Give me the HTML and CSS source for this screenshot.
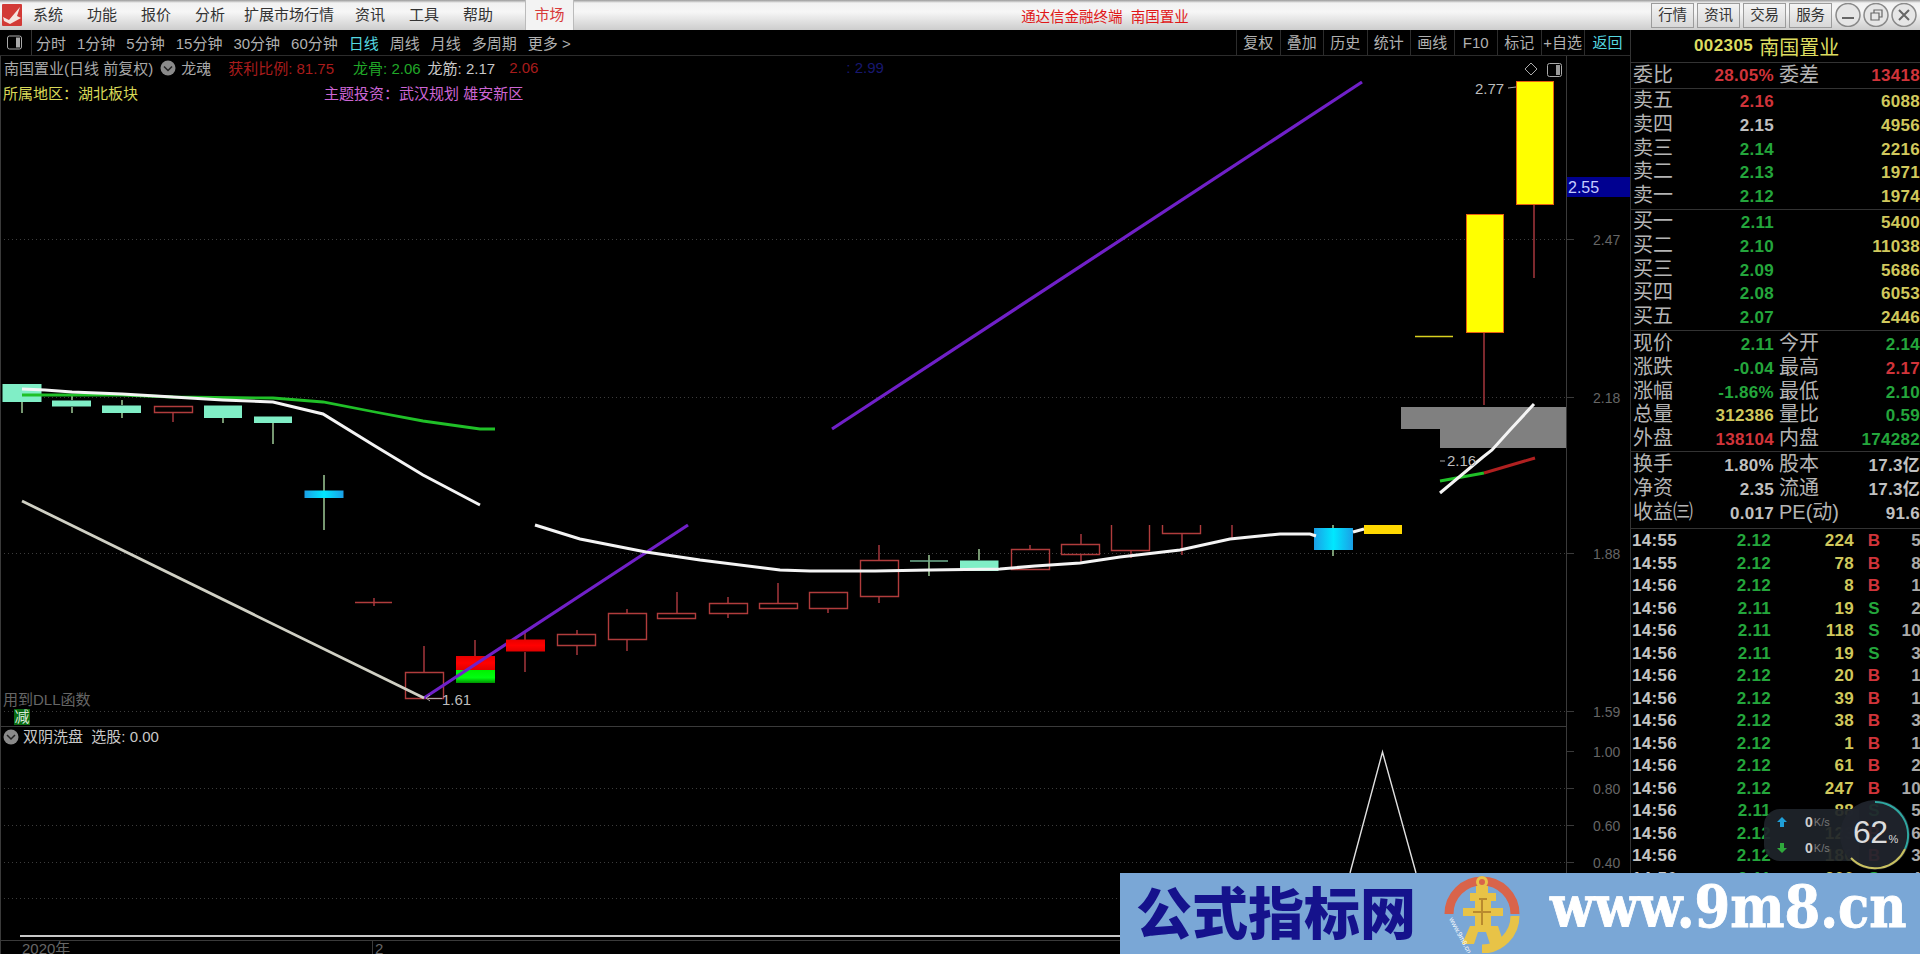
FILE: index.html
```html
<!DOCTYPE html>
<html lang="zh-CN">
<head>
    <meta charset="UTF-8">
    <title>通达信金融终端 南国置业</title>
    <link rel="stylesheet" href="styles.css">
</head>
<body>
<div class="app">

    <!-- menu bar -->
    <header class="menubar">
        <svg class="app-logo" width="20" height="22" viewBox="0 0 20 22">
            <rect width="20" height="22" rx="1" fill="#d23a36"/>
            <path d="M1 13 L7 16 L18 3 L15 12 L19 14 L8 20 L2 17 Z" fill="#f4e4e0"/>
        </svg>
        <nav class="menu">
            <span>系统</span><span>功能</span><span>报价</span><span>分析</span>
            <span class="menu-wide">扩展市场行情</span>
            <span>资讯</span><span>工具</span><span>帮助</span>
        </nav>
        <span class="market-tab">市场</span>
        <span class="app-title">通达信金融终端&nbsp; 南国置业</span>
        <div class="menu-btns">
            <span>行情</span><span>资讯</span><span>交易</span><span>服务</span>
        </div>
        <div class="win-btns">
            <svg width="26" height="24" viewBox="0 0 26 24"><ellipse cx="13" cy="12" rx="12" ry="11.5" class="win-circle"/><path d="M7 15h12" class="win-glyph"/></svg>
            <svg width="26" height="24" viewBox="0 0 26 24"><ellipse cx="13" cy="12" rx="12" ry="11.5" class="win-circle"/><path d="M8 10h8v7H8z M11 10V7h8v7h-3" class="win-glyph thin"/></svg>
            <svg width="26" height="24" viewBox="0 0 26 24"><ellipse cx="13" cy="12" rx="12" ry="11.5" class="win-circle"/><path d="M8 7l10 10 M18 7L8 17" class="win-glyph"/></svg>
        </div>
    </header>

    <div class="main">
        <section class="left">
            <!-- period toolbar -->
            <div class="toolbar">
                <svg class="panel-icon" width="15" height="14" viewBox="0 0 15 14">
                    <rect x="0.5" y="0.5" width="14" height="13" rx="2" fill="none" stroke="#aaa"/>
                    <rect x="9" y="2" width="4" height="10" fill="#aaa"/>
                </svg>
                <div class="periods">
                    <span>分时</span><span>1分钟</span><span>5分钟</span><span>15分钟</span><span>30分钟</span><span>60分钟</span>
                    <span class="cyan">日线</span><span>周线</span><span>月线</span><span>多周期</span><span>更多 &gt;</span>
                </div>
                <div class="tools">
                    <span>复权</span><span>叠加</span><span>历史</span><span>统计</span><span>画线</span><span>F10</span><span>标记</span><span>+自选</span><span class="cyan">返回</span>
                </div>
            </div>

            <div class="chart-wrap">
                <svg class="chart" width="1630" height="898" viewBox="0 56 1630 898">
                    <defs>
                        <linearGradient id="blueBody">
                            <stop offset="0" stop-color="#1b9fe6"/>
                            <stop offset="0.5" stop-color="#00e8ff"/>
                            <stop offset="1" stop-color="#1b9fe6"/>
                        </linearGradient>
                        <linearGradient id="redBody" x2="0" y2="1">
                            <stop offset="0" stop-color="#e80000"/>
                            <stop offset="0.5" stop-color="#ff0000"/>
                            <stop offset="1" stop-color="#e00000"/>
                        </linearGradient>
                        <linearGradient id="greenBody" x2="0" y2="1">
                            <stop offset="0" stop-color="#00f000"/>
                            <stop offset="0.6" stop-color="#00ff10"/>
                            <stop offset="1" stop-color="#009000"/>
                        </linearGradient>
                    </defs>

                    <!-- frame and axes -->
                    <path class="frame" d="M0.5 56V954 M1566.5 56V936 M0 726.5H1566 M0 940.5H1630"/>
                    <path class="grid" d="M0 239.5H1566 M0 397.5H1566 M0 553.5H1566 M0 711.5H1566 M0 788.5H1566 M0 825.5H1566 M0 862.5H1566 M0 898.5H1566"/>
                    <path class="frame" d="M1566 239.5h8 M1566 397.5h8 M1566 553.5h8 M1566 711.5h8 M1566 751.5h8 M1566 788.5h8 M1566 825.5h8 M1566 862.5h8"/>
                    <text class="axis" x="1593" y="245">2.47</text>
                    <text class="axis" x="1593" y="403">2.18</text>
                    <text class="axis" x="1593" y="559">1.88</text>
                    <text class="axis" x="1593" y="717">1.59</text>
                    <text class="axis" x="1593" y="757">1.00</text>
                    <text class="axis" x="1593" y="794">0.80</text>
                    <text class="axis" x="1593" y="831">0.60</text>
                    <text class="axis" x="1593" y="868">0.40</text>
                    <rect class="last-box" x="1567" y="177" width="63" height="20"/>
                    <text class="last-text" x="1568" y="193">2.55</text>

                    <!-- grey block near the end -->
                    <path class="block" d="M1401 407H1566V448H1440V429H1401Z"/>

                    <!-- wicks -->
                    <path class="wick-red" d="M173 413v9 M424 646v26 M475 640v16 M525 632v8 M525 652v20 M577 630v5 M577 646v9 M627 609v4 M627 640v11 M677 592v22 M728 597v7 M728 614v4 M778 583v21 M828 609v4 M879 545v16 M879 597v6 M1030 545v5 M1081 534v11 M1081 555v6 M1131 551v7 M1182 534v21 M1232 525v14 M374 598v8 M1484 333v72 M1534 205v73"/>
                    <path class="wick-green" d="M22 402v11 M72 395v5 M72 407v6 M122 400v5 M122 413v5 M223 418v5 M273 423v21 M324 475v55 M929 555v21 M979 549v11 M1333 525v3 M1333 550v6"/>

                    <!-- hollow up candles -->
                    <path class="hollow" d="M154.5 406.5h38v6h-38z M355 602.5h37 M405.5 672.5h38v26h-38z M557.5 634.5h38v11h-38z M608.5 613.5h38v26h-38z M657.5 613.5h38v5h-38z M709.5 603.5h38v10h-38z M759.5 603.5h38v5h-38z M809.5 592.5h38v16h-38z M860.5 560.5h38v36h-38z M1011.5 549.5h38v20h-38z M1061.5 544.5h38v10h-38z M1111.5 525v25.5h38v-25.5 M1162.5 525v8.5h38v-8.5"/>

                    <!-- falling candles -->
                    <path class="mint" d="M2.5 384h39v18h-39z M52 400.5h39v6h-39z M102 405.5h39v7.5h-39z M204 405.5h38v12.5h-38z M254 416.5h38v6.5h-38z M960 560.5h38.5v10.5h-38.5z"/>
                    <path class="doji" d="M910 561h38"/>
                    <rect x="304.5" y="490.5" width="39" height="7.5" fill="url(#blueBody)"/>
                    <rect x="1314" y="528" width="39" height="22" fill="url(#blueBody)"/>

                    <!-- signal candles -->
                    <rect x="456" y="656" width="39" height="14" fill="url(#redBody)"/>
                    <rect x="456" y="670" width="39" height="13" fill="url(#greenBody)"/>
                    <rect class="gold" x="1364" y="525" width="38" height="9"/>
                    <path class="doji-yellow" d="M1415 336.5h38"/>

                    <!-- moving lines -->
                    <polyline class="line-purple" points="424,698 688,525"/>
                    <polyline class="line-purple" points="832,429 1362,82"/>
                    <rect x="506" y="639.5" width="39" height="12" fill="url(#redBody)"/>
                    <rect class="yellow" x="1466.5" y="214.5" width="37" height="118"/>
                    <rect class="yellow" x="1516.5" y="81.5" width="37" height="123"/>
                    <polyline class="line-green" points="22,395 70,395 122,395 173,397 273,398 323,402 375,412 423,421 480,429 495,429"/>
                    <polyline class="line-green" points="1440,481 1484,473"/>
                    <polyline class="line-red" points="1484,473 1535,458"/>
                    <polyline class="line-white" points="22,389 45,390 72,392 122,394 173,397 223,400 273,402 323,414 375,446 423,475 480,505"/>
                    <polyline class="line-white" points="535,525 580,539 646,552 700,560 780,570 810,571 875,571 930,570 1000,569 1035,566 1080,563 1120,557 1180,550 1230,539 1280,534 1310,534 1316,536"/>
                    <polyline class="line-white" points="1353,532 1364,529"/>
                    <polyline class="line-white" points="1440,493 1483,457 1492,450 1510,430 1534,404"/>
                    <polyline class="line-grey" points="22,501 424,698"/>

                    <!-- price marks -->
                    <path class="mark" d="M1508 88l8-1 M1440 461h5 M428 698.5h14 M430 695l-4 3 4 3"/>
                    <text class="price-mark" x="1475" y="94">2.77</text>
                    <text class="price-mark" x="1447" y="466">2.16</text>
                    <text class="price-mark" x="442" y="705">1.61</text>
                    <path class="mark" d="M1531 63l6 6-6 6-6-6z"/>
                    <rect class="mark" x="1547.5" y="63.5" width="14" height="13" rx="2"/>
                    <rect x="1556" y="65" width="4" height="10" fill="#999"/>

                    <!-- lower pane -->
                    <polyline class="line-thin" points="1350,873 1382.5,752 1416,873"/>
                    <circle cx="11" cy="737" r="7.5" fill="#8a8a8a"/>
                    <path d="M7 735l4 4 4-4" fill="none" stroke="#222" stroke-width="1.5"/>

                    <!-- date axis -->
                    <rect class="date-bar" x="20" y="935" width="1110" height="2"/>
                    <path class="frame" d="M372.5 941V954"/>
                    <text class="date-text" x="22" y="954">2020年</text>
                    <text class="date-text" x="375" y="954">2</text>
                </svg>

                <div class="info info-main">
                    <div class="info-row">
                        <span class="stock">南国置业(日线 前复权)</span>
                        <svg class="chevron" width="16" height="16" viewBox="0 0 16 16"><circle cx="8" cy="8" r="7.5" fill="#8a8a8a"/><path d="M4 6.5l4 4 4-4" fill="none" stroke="#222" stroke-width="1.5"/></svg>
                        <span class="stock">龙魂</span>
                        <span class="dark-red i-profit">获利比例: 81.75</span>
                        <span class="i-bone"><span class="green">龙骨:</span> <span class="green">2.06</span></span>
                        <span class="white i-sinew">龙筋: 2.17</span>
                        <span class="dark-red i-last">2.06</span>
                        <span class="navy i-hidden">: 2.99</span>
                    </div>
                    <div class="info-row">
                        <span class="yellow-text">所属地区：湖北板块</span>
                        <span class="pink i-theme">主题投资：武汉规划 雄安新区</span>
                    </div>
                </div>

                <div class="info dll-note">
                    <div class="dll-text">用到DLL函数</div>
                    <span class="cut-badge">减</span>
                </div>
                <div class="info sub-title">双阴洗盘&nbsp; 选股: 0.00</div>
            </div>
        </section>

        <!-- quote panel -->
        <aside class="panel">
            <div class="stock-head"><span class="code">002305</span><span class="name">南国置业</span></div>

            <div class="block-row ratio">
                <div class="q"><span class="l">委比</span><span class="n red">28.05%</span><span class="l l2">委差</span><span class="n red">13418</span></div>
            </div>

            <div class="block-row sell">
                <div class="q"><span class="l">卖五</span><span class="n red">2.16</span><span class="n wide yel">6088</span></div>
                <div class="q"><span class="l">卖四</span><span class="n wht">2.15</span><span class="n wide yel">4956</span></div>
                <div class="q"><span class="l">卖三</span><span class="n grn">2.14</span><span class="n wide yel">2216</span></div>
                <div class="q"><span class="l">卖二</span><span class="n grn">2.13</span><span class="n wide yel">1971</span></div>
                <div class="q"><span class="l">卖一</span><span class="n grn">2.12</span><span class="n wide yel">1974</span></div>
            </div>

            <div class="block-row buy">
                <div class="q"><span class="l">买一</span><span class="n grn">2.11</span><span class="n wide yel">5400</span></div>
                <div class="q"><span class="l">买二</span><span class="n grn">2.10</span><span class="n wide yel">11038</span></div>
                <div class="q"><span class="l">买三</span><span class="n grn">2.09</span><span class="n wide yel">5686</span></div>
                <div class="q"><span class="l">买四</span><span class="n grn">2.08</span><span class="n wide yel">6053</span></div>
                <div class="q"><span class="l">买五</span><span class="n grn">2.07</span><span class="n wide yel">2446</span></div>
            </div>

            <div class="block-row stats">
                <div class="q"><span class="l">现价</span><span class="n grn">2.11</span><span class="l l2">今开</span><span class="n grn">2.14</span></div>
                <div class="q"><span class="l">涨跌</span><span class="n grn">-0.04</span><span class="l l2">最高</span><span class="n red">2.17</span></div>
                <div class="q"><span class="l">涨幅</span><span class="n grn">-1.86%</span><span class="l l2">最低</span><span class="n grn">2.10</span></div>
                <div class="q"><span class="l">总量</span><span class="n yel">312386</span><span class="l l2">量比</span><span class="n grn">0.59</span></div>
                <div class="q"><span class="l">外盘</span><span class="n red">138104</span><span class="l l2">内盘</span><span class="n grn">174282</span></div>
            </div>

            <div class="block-row finance">
                <div class="q"><span class="l">换手</span><span class="n wht">1.80%</span><span class="l l2">股本</span><span class="n wht">17.3亿</span></div>
                <div class="q"><span class="l">净资</span><span class="n wht">2.35</span><span class="l l2">流通</span><span class="n wht">17.3亿</span></div>
                <div class="q"><span class="l">收益㈢</span><span class="n wht">0.017</span><span class="l l2">PE(动)</span><span class="n wht">91.6</span></div>
            </div>

            <div class="ticks">
                <div class="t"><span>14:55</span><span class="grn">2.12</span><span class="yel">224</span><span class="b">B</span><span class="v">5</span></div>
                <div class="t"><span>14:55</span><span class="grn">2.12</span><span class="yel">78</span><span class="b">B</span><span class="v">8</span></div>
                <div class="t"><span>14:56</span><span class="grn">2.12</span><span class="yel">8</span><span class="b">B</span><span class="v">1</span></div>
                <div class="t"><span>14:56</span><span class="grn">2.11</span><span class="yel">19</span><span class="s">S</span><span class="v">2</span></div>
                <div class="t"><span>14:56</span><span class="grn">2.11</span><span class="yel">118</span><span class="s">S</span><span class="v">10</span></div>
                <div class="t"><span>14:56</span><span class="grn">2.11</span><span class="yel">19</span><span class="s">S</span><span class="v">3</span></div>
                <div class="t"><span>14:56</span><span class="grn">2.12</span><span class="yel">20</span><span class="b">B</span><span class="v">1</span></div>
                <div class="t"><span>14:56</span><span class="grn">2.12</span><span class="yel">39</span><span class="b">B</span><span class="v">1</span></div>
                <div class="t"><span>14:56</span><span class="grn">2.12</span><span class="yel">38</span><span class="b">B</span><span class="v">3</span></div>
                <div class="t"><span>14:56</span><span class="grn">2.12</span><span class="yel">1</span><span class="b">B</span><span class="v">1</span></div>
                <div class="t"><span>14:56</span><span class="grn">2.12</span><span class="yel">61</span><span class="b">B</span><span class="v">2</span></div>
                <div class="t"><span>14:56</span><span class="grn">2.12</span><span class="yel">247</span><span class="b">B</span><span class="v">10</span></div>
                <div class="t"><span>14:56</span><span class="grn">2.11</span><span class="yel">88</span><span class="s">S</span><span class="v">5</span></div>
                <div class="t"><span>14:56</span><span class="grn">2.12</span><span class="yel">123</span><span class="b">B</span><span class="v">6</span></div>
                <div class="t"><span>14:56</span><span class="grn">2.12</span><span class="yel">180</span><span class="b">B</span><span class="v">3</span></div>
                <div class="t"><span>14:56</span><span class="grn">2.11</span><span class="yel">200</span><span class="s">S</span><span class="v">4</span></div>
            </div>
        </aside>
    </div>

    <!-- floating speed meter -->
    <div class="speed">
        <div class="speed-pill">
            <div class="speed-row"><svg width="12" height="12" viewBox="0 0 12 12"><path d="M6 1l5 5H8v5H4V6H1z" fill="#1f9fd8"/></svg><b>0</b><i>K/s</i></div>
            <div class="speed-row"><svg width="12" height="12" viewBox="0 0 12 12"><path d="M6 11L1 6h3V1h4v5h3z" fill="#2fa83c"/></svg><b>0</b><i>K/s</i></div>
        </div>
        <div class="speed-dial">
            <svg width="72" height="72" viewBox="0 0 72 72">
                <circle cx="36" cy="36" r="35" fill="#20252d" fill-opacity="0.93"/>
                <path d="M36 3A33 33 0 0 1 66 50" fill="none" stroke="#2fa7a0" stroke-width="2"/>
                <path d="M66 50A33 33 0 0 1 12 59" fill="none" stroke="#c8c060" stroke-width="2"/>
            </svg>
            <span class="speed-num">62<small>%</small></span>
        </div>
    </div>

    <!-- site banner -->
    <div class="banner">
        <span class="banner-cn">公式指标网</span>
        <svg class="banner-logo" width="78" height="78" viewBox="0 0 78 78">
            <path d="M6 39A33 33 0 0 1 72 39" fill="none" stroke="#d9644a" stroke-width="9"/>
            <path d="M72 41A33 33 0 0 1 39 74" fill="none" stroke="#e8c347" stroke-width="9"/>
            <circle cx="39" cy="7" r="4.5" fill="none" stroke="#e8c347" stroke-width="3"/>
            <path d="M33 11h12v7h8v8h-5v7h12v8H48v10h7l6 18H47l-4-12h-8l-4 12H19l8-18h5V41H20v-8h12v-7h-5v-8h6z" fill="#e8c347"/>
            <path d="M36 24h8 M30 37h18 M39 24v26" stroke="#b98a2e" stroke-width="2" fill="none"/>
            <text class="banner-tiny" transform="translate(6 44) rotate(62)">www.9m8.cn</text>
        </svg>
        <span class="banner-url">www.9m8.cn</span>
    </div>
</div>
</body>
</html>
```

FILE: styles.css
```css
html, body {
    margin: 0;
    padding: 0;
    background: #000;
}
body {
    font-family: "Liberation Sans", "Noto Sans CJK SC", sans-serif;
    color: #bbb;
}
.app {
    position: relative;
    width: 1920px;
    height: 954px;
    overflow: hidden;
    display: flex;
    flex-direction: column;
}

/* menu bar */
.menubar {
    height: 30px;
    display: flex;
    align-items: center;
    flex: none;
    background: linear-gradient(#9a9a9a 0, #f2f2f2 3px, #f6f6f6 12px, #cdcdcd 100%);
    color: #333;
    font-size: 15px;
    white-space: nowrap;
}
.menubar > * {
    flex: none;
}
.app-logo {
    margin-left: 2px;
}
.menu {
    display: flex;
    gap: 24px;
    margin-left: 11px;
    margin-bottom: 3px;
}
.menu-wide {
    margin: 0 -3px 0 -5px;
}
.market-tab {
    margin-left: 32px;
    width: 49px;
    height: 30px;
    line-height: 29px;
    text-align: center;
    color: #d83a3a;
    background: #f3f3f3;
    border-left: 1px solid #bbb;
    border-right: 1px solid #bbb;
    box-sizing: border-box;
}
.app-title {
    margin-left: 447px;
    color: #e01818;
    font-size: 14.5px;
    width: 630px;
}
.menu-btns {
    display: flex;
    gap: 3px;
}
.menu-btns span {
    width: 41px;
    height: 23px;
    line-height: 22px;
    text-align: center;
    border: 1px solid #9c9c9c;
    background: linear-gradient(#f4f4f4, #d8d8d8);
    font-size: 14.5px;
}
.win-btns {
    display: flex;
    gap: 2px;
    margin-left: 3px;
}
.win-circle {
    fill: #e6e6e6;
    stroke: #8a8a8a;
    stroke-width: 1.5;
}
.win-glyph {
    fill: none;
    stroke: #666;
    stroke-width: 2;
}
.win-glyph.thin {
    stroke-width: 1.2;
}

.main {
    flex: 1;
    display: flex;
    min-height: 0;
}
.left {
    width: 1630px;
    display: flex;
    flex-direction: column;
    flex: none;
}

/* toolbar */
.toolbar {
    height: 26px;
    flex: none;
    display: flex;
    align-items: center;
    box-sizing: border-box;
    border-bottom: 1px solid #2c2c2c;
    font-size: 15px;
    color: #b0b0b0;
    white-space: nowrap;
}
.panel-icon {
    margin-left: 7px;
    padding-right: 9px;
    border-right: 1px solid #333;
    height: 25px;
}
.periods {
    display: flex;
    gap: 11px;
    margin-left: 4px;
}
.cyan {
    color: #56d8e0;
}
.tools {
    display: flex;
    margin-left: auto;
    height: 25px;
}
.tools span {
    width: 43.5px;
    line-height: 25px;
    text-align: center;
    border-left: 1px solid #2c2c2c;
    box-sizing: border-box;
}
.tools .cyan {
    width: 46px;
    color: #56d8e0;
}

/* chart */
.chart-wrap {
    position: relative;
    flex: 1;
}
.chart {
    display: block;
}
.frame {
    fill: none;
    stroke: #3a3a3a;
    stroke-width: 1;
}
.grid {
    fill: none;
    stroke: #3c3c3c;
    stroke-width: 1;
    stroke-dasharray: 1 3;
}
.axis {
    fill: #666;
    font-size: 14px;
}
.last-box {
    fill: #000090;
}
.last-text {
    fill: #c4ccff;
    font-size: 16px;
}
.block {
    fill: #808080;
}
.wick-red {
    fill: none;
    stroke: #b03a40;
    stroke-width: 1.4;
}
.wick-green {
    fill: none;
    stroke: #a8d8a0;
    stroke-width: 1.4;
}
.hollow {
    fill: none;
    stroke: #b03c3c;
    stroke-width: 1.4;
}
.mint {
    fill: #80eec6;
}
.doji {
    fill: none;
    stroke: #70b090;
    stroke-width: 1.4;
}
.doji-yellow {
    fill: none;
    stroke: #d8d020;
    stroke-width: 1.6;
}
.gold {
    fill: #ffd800;
}
.yellow {
    fill: #ffff00;
    stroke: #e86010;
    stroke-width: 1;
}
.line-purple {
    fill: none;
    stroke: #7020c8;
    stroke-width: 3.2;
}
.line-green {
    fill: none;
    stroke: #20c028;
    stroke-width: 2.8;
}
.line-red {
    fill: none;
    stroke: #b02020;
    stroke-width: 3;
}
.line-white {
    fill: none;
    stroke: #f4f4f4;
    stroke-width: 3;
}
.line-grey {
    fill: none;
    stroke: #d0d0c4;
    stroke-width: 2.8;
}
.line-thin {
    fill: none;
    stroke: #e0e0e0;
    stroke-width: 1.4;
}
.mark {
    fill: none;
    stroke: #aaa;
    stroke-width: 1;
}
.price-mark {
    fill: #bdbdbd;
    font-size: 15px;
}
.date-bar {
    fill: #c8c8c8;
}
.date-text {
    fill: #666;
    font-size: 15px;
}

/* texts over the chart */
.info {
    position: absolute;
    font-size: 15px;
    white-space: nowrap;
}
.info-main {
    left: 3px;
    top: -1px;
}
.info-row {
    display: flex;
    align-items: center;
    height: 25px;
}
.stock {
    color: #a8a8a8;
    margin-left: 1px;
}
.chevron {
    margin: 0 4px 0 7px;
}
.dark-red {
    color: #a81c1c;
}
.green {
    color: #20a828;
}
.white {
    color: #c8c8c8;
}
.navy {
    color: #181870;
}
.yellow-text {
    color: #d8d858;
}
.pink {
    color: #cc66d4;
}
.i-profit {
    margin-left: 17px;
}
.i-bone {
    margin-left: 19px;
}
.i-sinew {
    margin-left: 7px;
}
.i-last {
    margin-left: 14px;
}
.i-hidden {
    margin-left: 308px;
}
.i-theme {
    margin-left: 186px;
}
.dll-note {
    left: 3px;
    top: 634px;
}
.dll-text {
    color: #666;
    line-height: 20px;
}
.cut-badge {
    display: block;
    width: 16px;
    height: 16px;
    margin-left: 11px;
    margin-top: -1px;
    line-height: 16px;
    text-align: center;
    background: #0a6a12;
    color: #d8e8d8;
}
.sub-title {
    left: 23px;
    top: 671px;
    line-height: 20px;
    color: #c8c8c8;
}

/* quote panel */
.panel {
    flex: 1;
    min-width: 0;
    overflow: hidden;
    border-left: 1px solid #333;
    box-sizing: border-box;
    display: flex;
    flex-direction: column;
}
.stock-head {
    height: 33px;
    flex: none;
    box-sizing: border-box;
    border-bottom: 1px solid #333;
    display: flex;
    align-items: center;
    padding-left: 63px;
    color: #dcdc60;
}
.code {
    font-size: 17px;
    font-weight: bold;
    letter-spacing: 0.4px;
}
.name {
    font-size: 20px;
    margin-left: 6px;
}
.block-row {
    flex: none;
    box-sizing: border-box;
    border-bottom: 1px solid #333;
}
.ratio {
    height: 26px;
}
.sell, .buy, .stats {
    height: 121px;
}
.stats {
    padding-top: 1px;
}
.finance {
    height: 77px;
    padding-top: 1px;
}
.q {
    display: grid;
    grid-template-columns: 61px 82px 62px 84px;
    height: 23.75px;
    line-height: 23.75px;
    white-space: nowrap;
}
.ratio .q {
    height: 25px;
    line-height: 24px;
}
.l {
    font-size: 20px;
    color: #b4b4b4;
    padding-left: 2px;
}
.l2 {
    padding-left: 5px;
}
.n {
    text-align: right;
    font-size: 17px;
    font-weight: bold;
    letter-spacing: 0.3px;
    padding-top: 1px;
}
.wide {
    grid-column: 3 / 5;
}
.red {
    color: #d0343a;
}
.grn {
    color: #24a63c;
}
.yel {
    color: #d0c85c;
}
.wht {
    color: #c0c0c0;
}
.ticks {
    flex: 1;
    min-height: 0;
    overflow: hidden;
    padding-top: 1px;
}
.t {
    display: grid;
    grid-template-columns: 50px 89px 83px 40px 27px;
    height: 22.5px;
    line-height: 22.5px;
    font-size: 17px;
    font-weight: bold;
    letter-spacing: 0.3px;
    color: #c4c4c4;
    padding-left: 1px;
}
.t span:nth-child(2), .t span:nth-child(3), .t .v {
    text-align: right;
}
.t .v {
    color: #aaa;
}
.t .b, .t .s {
    text-align: center;
}
.t .b {
    color: #d0343a;
}
.t .s {
    color: #24a63c;
}

/* speed meter */
.speed {
    position: absolute;
    left: 1764px;
    top: 799px;
    display: flex;
    align-items: center;
}
.speed-pill {
    width: 95px;
    height: 52px;
    margin-right: -20px;
    border-radius: 16px 0 0 16px;
    background: rgba(30, 35, 42, 0.93);
    display: flex;
    flex-direction: column;
    justify-content: space-around;
    padding: 0 0 0 12px;
    box-sizing: border-box;
}
.speed-row {
    display: flex;
    align-items: center;
    height: 24px;
    color: #ccc;
}
.speed-row b {
    margin-left: 17px;
    font-size: 14px;
}
.speed-row i {
    font-style: normal;
    font-size: 11px;
    color: #777;
    margin-left: 1px;
}
.speed-dial {
    position: relative;
    width: 72px;
    height: 72px;
}
.speed-num {
    position: absolute;
    left: 14px;
    top: 15px;
    font-size: 32px;
    color: #dcdcdc;
    letter-spacing: -0.5px;
}
.speed-num small {
    font-size: 11px;
    margin-left: 1px;
}

/* site banner */
.banner {
    position: absolute;
    left: 1120px;
    top: 873px;
    width: 800px;
    height: 81px;
    background: #7aa7d6;
    display: flex;
    align-items: center;
    white-space: nowrap;
}
.banner > * {
    flex: none;
}
.banner-cn {
    margin-left: 16px;
    margin-top: -8px;
    font-size: 56px;
    font-weight: 900;
    line-height: 70px;
    color: #15128c;
    font-family: "Noto Sans CJK SC", sans-serif;
}
.banner-logo {
    margin-left: 27px;
}
.banner-tiny {
    font-size: 7px;
    fill: #fff;
}
.banner-url {
    margin-left: 29px;
    margin-top: -14px;
    font-family: "DejaVu Serif", serif;
    font-stretch: condensed;
    font-weight: bold;
    font-size: 57px;
    line-height: 60px;
    color: #fff;
    -webkit-text-stroke: 0.8px #fff;
}
```
